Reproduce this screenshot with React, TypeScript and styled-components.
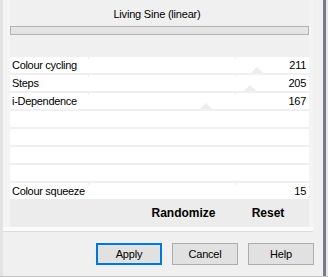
import styled, { createGlobalStyle } from 'styled-components';

const GlobalStyle = createGlobalStyle`
  html, body {
    margin: 0;
    padding: 0;
    background: #f0f0f0;
  }
  body {
    font-family: "Liberation Sans", Arial, sans-serif;
    font-size: 11px;
    color: #000;
  }
`;

interface Param {
  label?: string;
  value?: number;
}

const params: Param[] = [
  { label: 'Colour cycling', value: 211 },
  { label: 'Steps', value: 205 },
  { label: 'i-Dependence', value: 167 },
  {},
  {},
  {},
  {},
  { label: 'Colour squeeze', value: 15 },
];

const App = () => {
  return (
    <Dialog>
      <GlobalStyle />
      <LeftRail />
      <Content>
        <GroupBox>
          <Panel>
            <Title>Living Sine (linear)</Title>
            <Bar />
            <Rows>
              {params.map((p, i) => (
                <Row key={i}>
                  {p.label && (
                    <>
                      <Tick style={{ left: 78 }} />
                      <Tick style={{ left: 225 }} />
                      <Label>{p.label}</Label>
                      <Value>{p.value}</Value>
                      {p.value! > 100 && <Thumb style={{ left: (p.value! / 255) * 299 - 6 }} />}
                    </>
                  )}
                </Row>
              ))}
            </Rows>
            <ActionBar>
              <span />
              <ActionText>Randomize</ActionText>
              <ActionText>Reset</ActionText>
            </ActionBar>
          </Panel>
        </GroupBox>
        <ButtonRow>
          <Button isDefault>Apply</Button>
          <Button>Cancel</Button>
          <Button>Help</Button>
        </ButtonRow>
      </Content>
      <RightFrame />
    </Dialog>
  );
};

export default App;

const Dialog = styled.div`
  display: flex;
  width: 328px;
  height: 277px;
  box-sizing: border-box;
  border-bottom: 1px solid #c4c4c4;
  background: #f0f0f0;
  overflow: hidden;
`;

const LeftRail = styled.div`
  width: 3px;
  background: #e3e3e3;
`;

const Content = styled.div`
  display: flex;
  flex-direction: column;
  width: 320px;
`;

const GroupBox = styled.div`
  width: 310px;
  height: 231px;
  box-sizing: border-box;
  padding-left: 7px;
  background: #f4f4f4;
  border-bottom: 4px solid #fbfbfb;
  box-shadow: 0 1px 0 #dcdcdc;
`;

const Panel = styled.div`
  display: flex;
  flex-direction: column;
  width: 299px;
  height: 227px;
  background: #f0f0f0;
`;

const Title = styled.div`
  height: 24px;
  padding-top: 2px;
  line-height: 24px;
  text-align: center;
  letter-spacing: -0.2px;
  padding-right: 5px;
`;

const Bar = styled.div`
  height: 9px;
  box-sizing: border-box;
  border: 1px solid #b3b3b3;
  background: #e4e4e4;
  margin-bottom: 22px;
`;

const Rows = styled.div`
  display: grid;
  grid-template-rows: repeat(8, 16px);
  row-gap: 2px;
`;

const Row = styled.div`
  position: relative;
  display: flex;
  justify-content: space-between;
  align-items: center;
  padding: 0 3px 0 2px;
  background: #fff;
  line-height: 16px;
  letter-spacing: -0.3px;
`;

const Label = styled.span`
  position: relative;
`;

const Value = styled.span`
  position: relative;
`;

const Thumb = styled.div`
  position: absolute;
  bottom: 0;
  width: 0;
  height: 0;
  border-left: 6px solid transparent;
  border-right: 6px solid transparent;
  border-bottom: 6px solid #ececec;
`;

const Tick = styled.div`
  position: absolute;
  top: 0;
  width: 1px;
  height: 2px;
  background: #ececec;
`;

const ActionBar = styled.div`
  display: grid;
  grid-template-columns: 130px 87px 82px;
  align-items: center;
  height: 28px;
  background: #ececec;
`;

const ActionText = styled.span`
  font-size: 12px;
  font-weight: bold;
  text-align: center;
`;

const ButtonRow = styled.div`
  display: flex;
  justify-content: flex-end;
  gap: 10px;
  padding: 12px 9px 0 0;
`;

const Button = styled.div<{ isDefault?: boolean }>`
  width: 66px;
  height: 22px;
  box-sizing: border-box;
  display: flex;
  align-items: center;
  justify-content: center;
  background: #e1e1e1;
  border: ${(props) => (props.isDefault ? '2px solid #0078d7' : '1px solid #adadad')};
  letter-spacing: -0.2px;
`;

const RightFrame = styled.div`
  width: 5px;
  box-sizing: border-box;
  border-left: 3px solid #737c8b;
  background: #e6e6e6;
`;
